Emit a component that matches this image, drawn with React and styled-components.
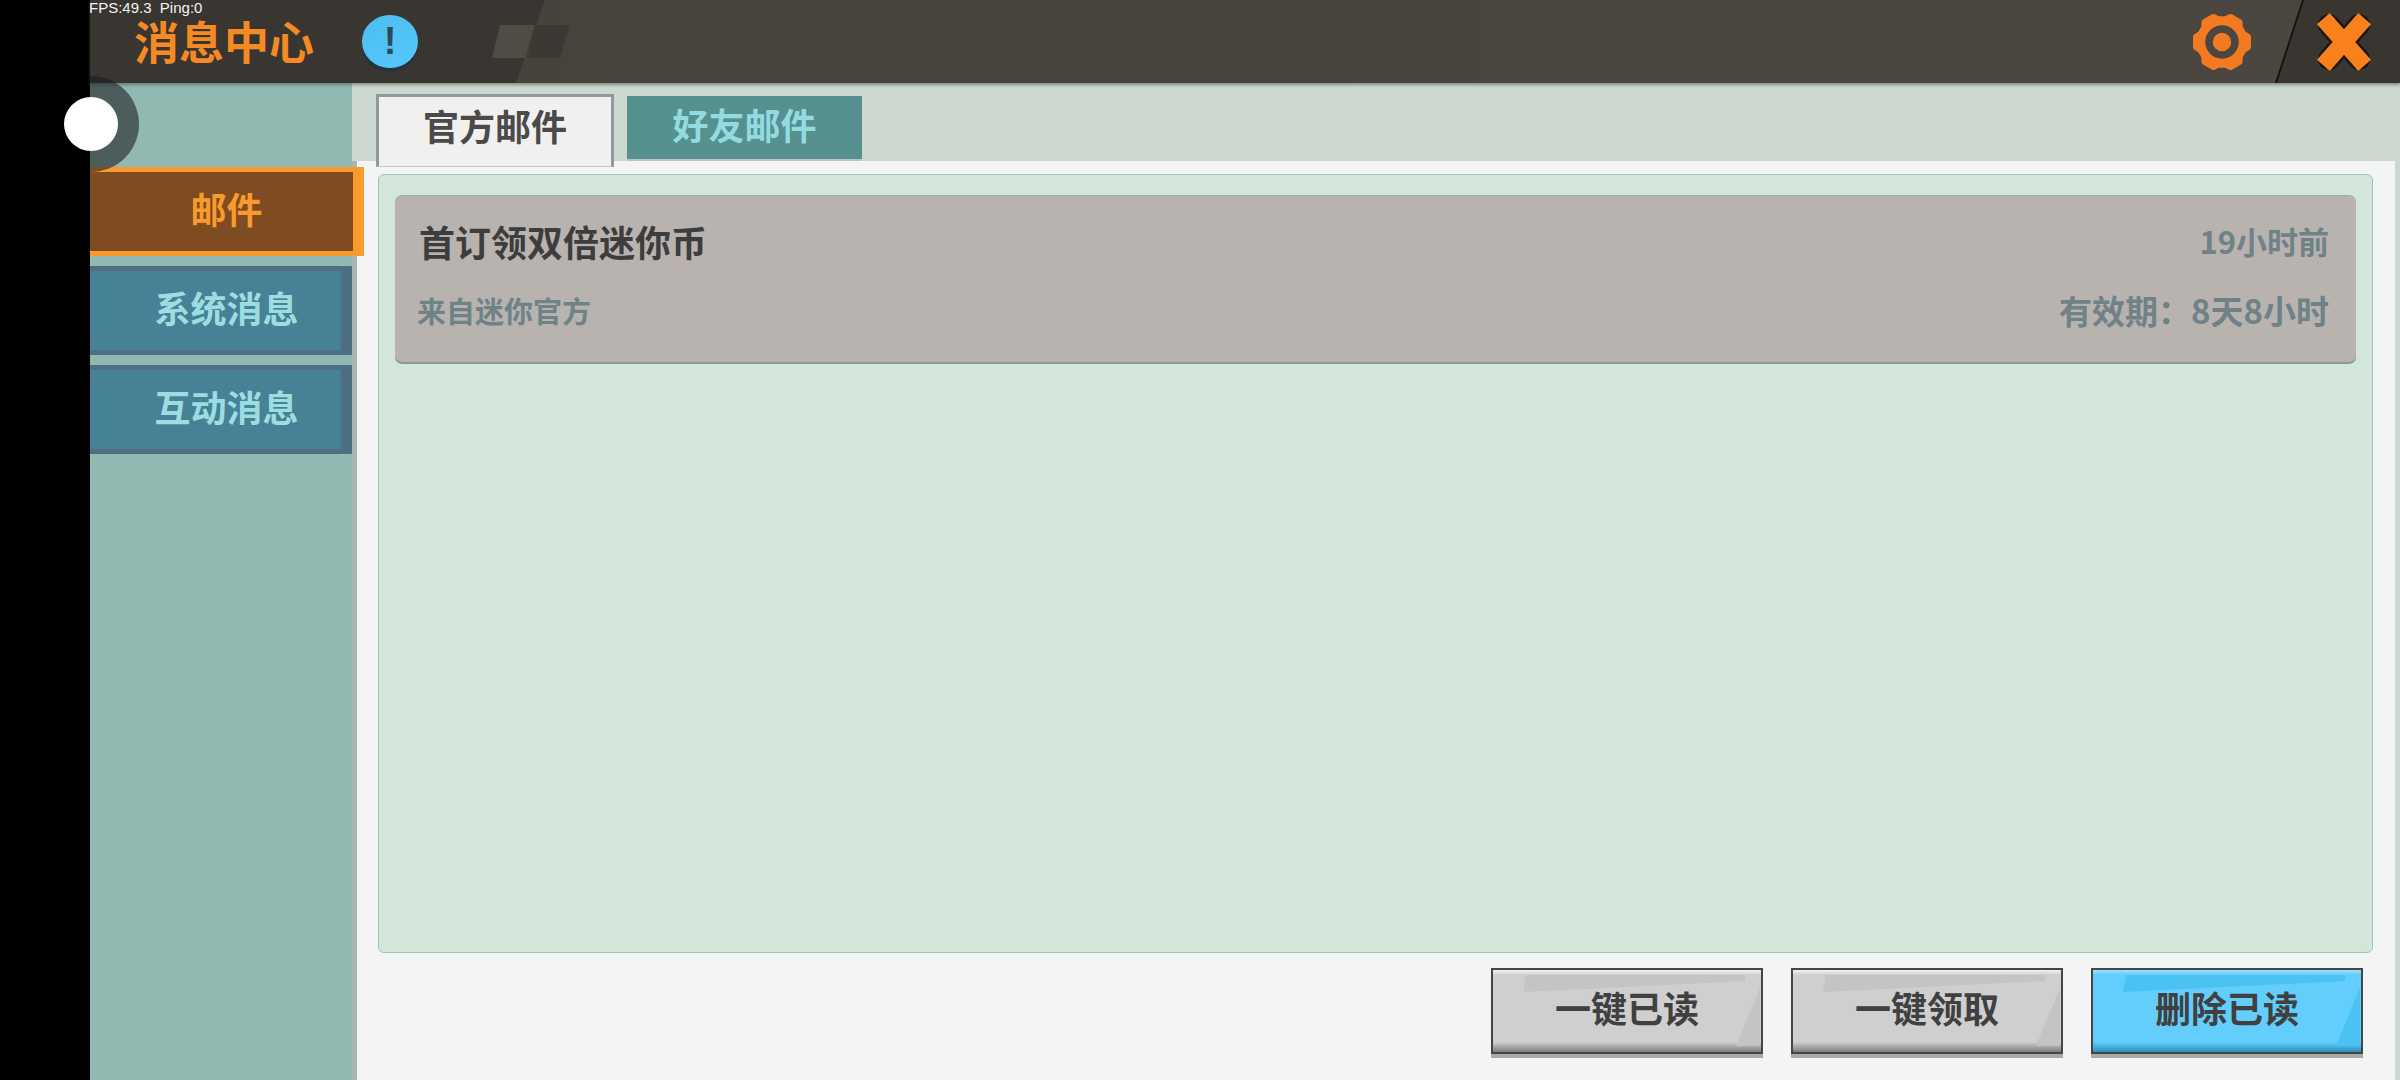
import React from 'react';
import styled, { createGlobalStyle } from 'styled-components';

const CJK = `"Noto Sans CJK SC", "Noto Sans", sans-serif`;

const GlobalStyle = createGlobalStyle`
  html, body {
    margin: 0;
    padding: 0;
    background: #000;
    overflow: hidden;
  }
  * {
    box-sizing: border-box;
  }
`;

const Page = styled.div`
  position: relative;
  display: flex;
  width: 2400px;
  height: 1080px;
  overflow: hidden;
  background: #000;
  font-family: ${CJK};
`;

const Rail = styled.div`
  flex: 0 0 90px;
  background: #000;
`;

const Main = styled.div`
  flex: 1;
  display: flex;
  flex-direction: column;
  min-width: 0;
`;

const Header = styled.header`
  position: relative;
  z-index: 3;
  flex: 0 0 83px;
  display: flex;
  align-items: center;
  padding-left: 44px;
  background: #393631;
  box-shadow: 0 2px 3px rgba(70, 85, 80, 0.55);
  overflow: hidden;
`;

const HeaderLight = styled.div`
  position: absolute;
  inset: 0;
  background: linear-gradient(90deg, #46423b, #4b463f);
  clip-path: polygon(455px 0, 2213px 0, 2185px 100%, 426px 100%);
`;

const HeaderDecor = styled.svg`
  position: absolute;
  left: 300px;
  top: 0;
`;

const EdgeLine = styled.div`
  position: absolute;
  left: 2185px;
  top: 0;
  width: 29px;
  height: 83px;
  background: #16130f;
  clip-path: polygon(27px 0, 29px 0, 2px 100%, 0 100%);
`;

const Title = styled.h1`
  position: relative;
  margin: 0 0 2px;
  width: 228px;
  font-size: 45px;
  line-height: 52px;
  font-weight: 700;
  color: #f58a25;
`;

const InfoBadge = styled.div`
  position: relative;
  width: 56px;
  height: 53px;
  margin-top: -1px;
  border-radius: 50%;
  background: linear-gradient(160deg, #4dbdf0, #55c8fb);
  box-shadow: 0 4px 0 #26333a;
  color: #2b4a5c;
  font-family: "Liberation Sans", sans-serif;
  font-size: 38px;
  font-weight: 700;
  line-height: 53px;
  text-align: center;
`;

const HeaderActions = styled.div`
  position: relative;
  margin-left: auto;
  display: flex;
  align-items: center;
  gap: 63px;
  padding-right: 29px;
`;

const GEAR_TEETH = 6;

function gearPoints() {
  const pts = [];
  for (let i = 0; i < GEAR_TEETH; i++) {
    const a = (i * Math.PI * 2) / GEAR_TEETH;
    [
      [-0.36, 23],
      [-0.2, 26.5],
      [0.2, 26.5],
      [0.36, 23],
    ].forEach(([d, r]) => {
      pts.push(`${(32 + Math.cos(a + d) * r).toFixed(1)},${(32 + Math.sin(a + d) * r).toFixed(1)}`);
    });
  }
  return pts.join(' ');
}

function GearIcon() {
  return (
    <svg width="64" height="64" viewBox="0 0 64 64">
      <polygon points={gearPoints()} fill="#f47a22" stroke="#f47a22" strokeWidth="6" strokeLinejoin="round" />
      <circle cx="32" cy="32" r="13" fill="none" stroke="#4a4640" strokeWidth="7.5" />
    </svg>
  );
}

function CloseIcon() {
  return (
    <svg width="54" height="60" viewBox="0 0 54 60">
      <path d="M12 13 L42 47 M42 13 L12 47" stroke="#1d1712" strokeWidth="22" strokeLinecap="round" fill="none" />
      <path d="M12 13 L42 47 M42 13 L12 47" stroke="#f8811c" strokeWidth="17" strokeLinecap="square" fill="none" />
    </svg>
  );
}

const Body = styled.div`
  flex: 1;
  display: flex;
  min-height: 0;
`;

const Sidebar = styled.nav`
  position: relative;
  z-index: 2;
  flex: 0 0 262px;
  min-width: 0;
  display: flex;
  flex-direction: column;
  gap: 10px;
  padding-top: 84px;
  background: #92b8b2;
`;

const NavItem = styled.div`
  flex: 0 0 89px;
  display: flex;
  align-items: center;
  justify-content: center;
  font-size: 36px;
  font-weight: 700;
  padding-bottom: 8px;
  padding-left: ${(p) => (p.$active ? '10px' : '22px')};
  width: ${(p) => (p.$active ? '274px' : '262px')};
  color: ${(p) => (p.$active ? '#f89a2c' : '#9cdde2')};
  background: ${(p) => (p.$active ? '#7e4c20' : '#468195')};
  border-style: solid;
  border-color: ${(p) => (p.$active ? '#f89a2c' : '#4c6f82')};
  border-width: 5px 11px 5px 0;
`;

const Content = styled.div`
  flex: 1;
  display: flex;
  flex-direction: column;
  min-width: 0;
  background: #ccd8d0;
`;

const TabRow = styled.div`
  position: relative;
  z-index: 1;
  flex: 0 0 78px;
  height: 78px;
  min-height: 0;
  display: flex;
  align-items: flex-start;
  gap: 13px;
  padding: 11px 0 0 24px;
`;

const Tab = styled.div`
  flex: none;
  display: flex;
  align-items: center;
  justify-content: center;
  font-size: 36px;
  font-weight: 700;
  ${(p) =>
    p.$active
      ? `
    width: 238px;
    height: 73px;
    padding-bottom: 14px;
    background: #f1f0ee;
    color: #4a4a4a;
    border: 3px solid #8e9aa0;
    border-bottom: 1px solid #c3c8c6;
  `
      : `
    width: 235px;
    height: 65px;
    margin-top: 2px;
    padding-bottom: 8px;
    background: #56908f;
    color: #92dbe0;
    border-bottom: 2px solid #b5c7c3;
  `}
`;

const Panel = styled.section`
  flex: 1;
  display: flex;
  flex-direction: column;
  min-height: 0;
  margin-right: 5px;
  padding: 13px 22px 0 21px;
  background: #f3f5f4;
  border-left: 5px solid #a9b6b2;
`;

const MailBox = styled.div`
  flex: 0 0 779px;
  padding: 21px 16px;
  background: #d2e6da;
  border: 1px solid #9fc4b6;
  border-radius: 6px;
`;

const MailRow = styled.div`
  height: 166px;
  display: grid;
  grid-template-columns: 1fr auto;
  grid-template-rows: 89px 50px;
  align-items: center;
  padding: 0 27px 0 22px;
  background: #b9b3b0;
  border-radius: 7px;
  box-shadow: 0 2px 0 #8d9a94, 0 -1px 0 #a0ada7;
`;

const MailTitle = styled.div`
  padding-left: 2px;
  font-size: 36px;
  font-weight: 700;
  color: #3d3d3d;
`;

const MailMeta = styled.div`
  font-size: ${(p) => p.$size}px;
  font-weight: 700;
  color: #6f8287;
  text-align: ${(p) => p.$align || 'left'};
`;

const Actions = styled.div`
  display: flex;
  justify-content: flex-end;
  gap: 28px;
  padding: 15px 10px 0 0;
`;

const ActionButton = styled.button`
  position: relative;
  flex: none;
  width: 272px;
  height: 86px;
  padding: 0 0 8px;
  font-family: ${CJK};
  font-size: 36px;
  font-weight: 700;
  color: #404040;
  border: 2px solid #454545;
  background: ${(p) =>
    p.$primary
      ? 'linear-gradient(#9fe2fc 0, #63cdfb 5px, #63cdfb 72px, #2b8fb8 82px)'
      : 'linear-gradient(#f3f3f3 0, #cfcfcf 5px, #cfcfcf 72px, #7c7c7c 82px)'};
  box-shadow: 0 4px 0 #a8aaaa;

  &::before,
  &::after {
    content: '';
    position: absolute;
    background: ${(p) => (p.$primary ? '#4ac2f2' : '#c4c4c4')};
  }
  &::before {
    left: 30px;
    top: 5px;
    width: 222px;
    height: 17px;
    clip-path: polygon(3px 0, 100% 0, 100% 35%, 0 100%);
  }
  &::after {
    right: 1px;
    top: 18px;
    width: 24px;
    height: 58px;
    clip-path: polygon(100% 0, 100% 100%, 0 100%);
  }
`;

const ButtonLabel = styled.span`
  position: relative;
  z-index: 1;
`;

const FpsText = styled.div`
  position: absolute;
  z-index: 5;
  left: 89px;
  top: 0;
  font-family: "Liberation Sans", sans-serif;
  font-size: 15px;
  line-height: 15px;
  white-space: pre;
  color: #f4f4f4;
`;

const JoyRing = styled.div`
  position: absolute;
  z-index: 4;
  left: 43px;
  top: 76px;
  width: 96px;
  height: 96px;
  border-radius: 50%;
  background: rgba(28, 28, 28, 0.58);
  clip-path: inset(0 0 0 47px);
`;

const JoyKnob = styled.div`
  position: absolute;
  z-index: 4;
  left: 64px;
  top: 97px;
  width: 54px;
  height: 54px;
  border-radius: 50%;
  background: #fff;
`;

const navItems = ['邮件', '系统消息', '互动消息'];
const actions = [
  { label: '一键已读' },
  { label: '一键领取' },
  { label: '删除已读', primary: true },
];

export default function App() {
  return (
    <Page>
      <GlobalStyle />
      <Rail />
      <Main>
        <Header>
          <HeaderLight />
          <HeaderDecor width="200" height="83" viewBox="0 0 200 83">
            <polygon points="110,25 145,25 135,58 102,58" fill="#504c45" />
            <polygon points="145,25 180,25 170,58 137,58" fill="#3c3934" />
          </HeaderDecor>
          <EdgeLine />
          <Title>消息中心</Title>
          <InfoBadge>!</InfoBadge>
          <HeaderActions>
            <GearIcon />
            <CloseIcon />
          </HeaderActions>
        </Header>
        <Body>
          <Sidebar>
            {navItems.map((item, i) => (
              <NavItem key={item} $active={i === 0}>
                {item}
              </NavItem>
            ))}
          </Sidebar>
          <Content>
            <TabRow>
              <Tab $active>官方邮件</Tab>
              <Tab>好友邮件</Tab>
            </TabRow>
            <Panel>
              <MailBox>
                <MailRow>
                  <MailTitle>首订领双倍迷你币</MailTitle>
                  <MailMeta $size={31} $align="right">
                    19小时前
                  </MailMeta>
                  <MailMeta $size={29}>来自迷你官方</MailMeta>
                  <MailMeta $size={33} $align="right">
                    有效期：8天8小时
                  </MailMeta>
                </MailRow>
              </MailBox>
              <Actions>
                {actions.map((a) => (
                  <ActionButton key={a.label} $primary={a.primary}>
                    <ButtonLabel>{a.label}</ButtonLabel>
                  </ActionButton>
                ))}
              </Actions>
            </Panel>
          </Content>
        </Body>
      </Main>
      <FpsText>FPS:49.3  Ping:0</FpsText>
      <JoyRing />
      <JoyKnob />
    </Page>
  );
}
